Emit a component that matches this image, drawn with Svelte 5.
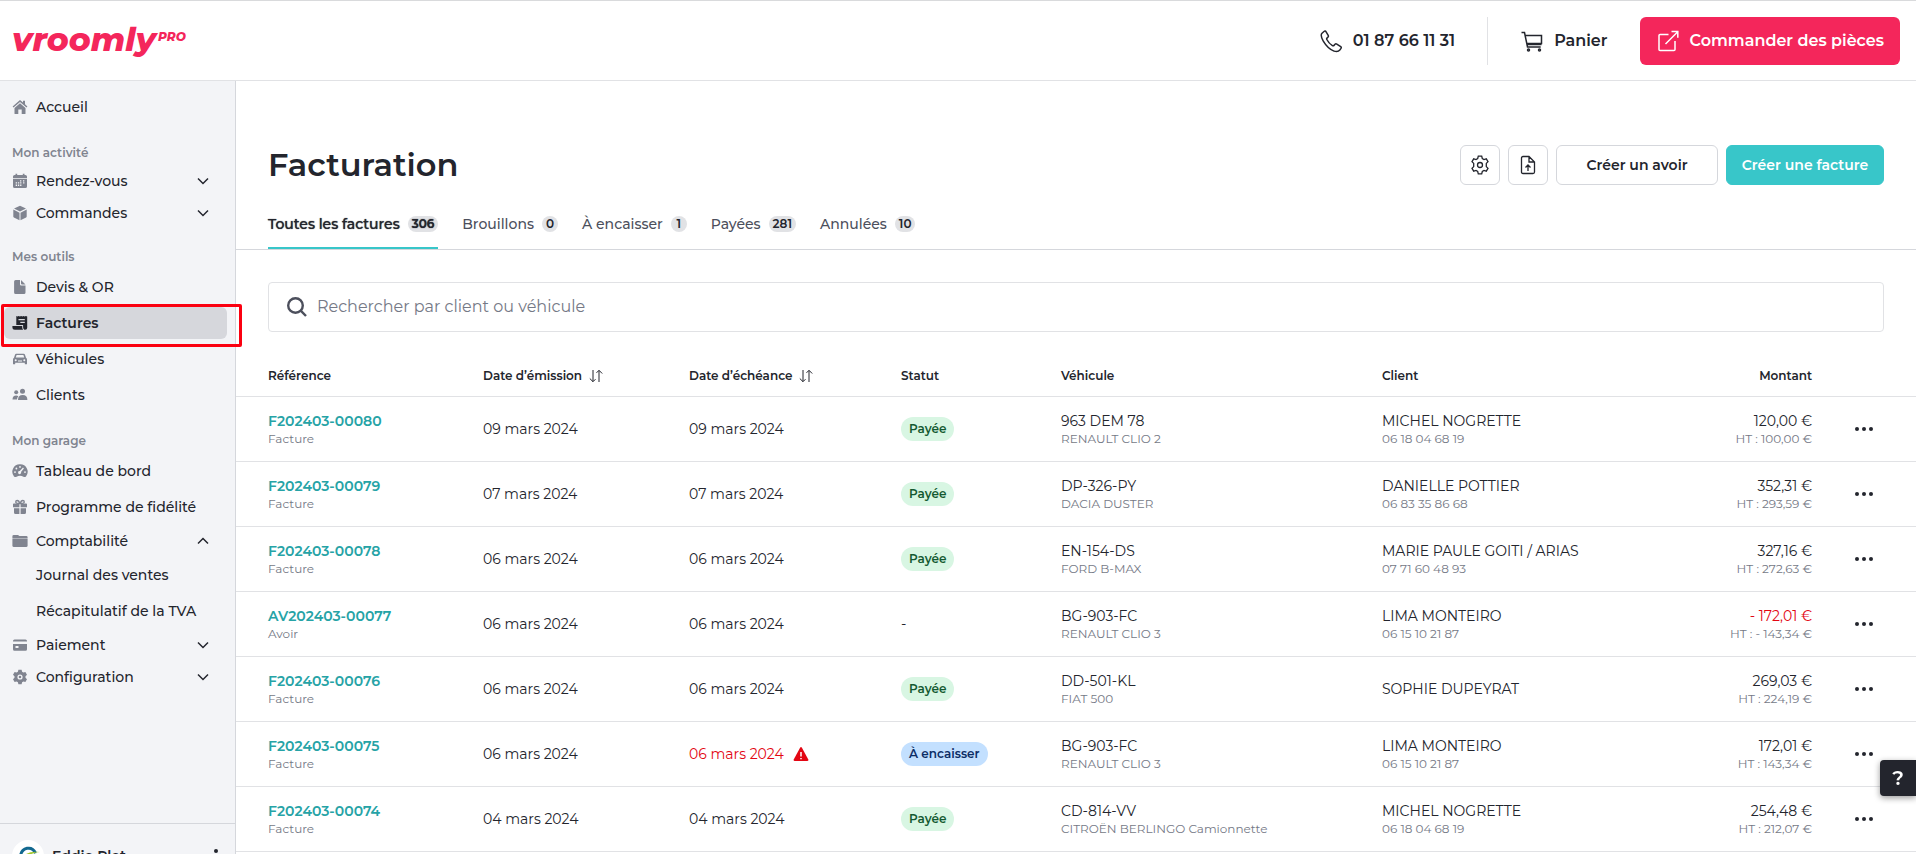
<script>
  let search = $state("");
  let activeTab = $state("Toutes les factures");

  const menu = [
    { items: [{ label: "Accueil", icon: "home" }] },
    {
      title: "Mon activité",
      items: [
        { label: "Rendez-vous", icon: "calendar", group: true },
        { label: "Commandes", icon: "box", group: true },
      ],
    },
    {
      title: "Mes outils",
      items: [
        { label: "Devis & OR", icon: "file" },
        { label: "Factures", icon: "receipt", active: true },
        { label: "Véhicules", icon: "car" },
        { label: "Clients", icon: "users" },
      ],
    },
    {
      title: "Mon garage",
      items: [
        { label: "Tableau de bord", icon: "gauge" },
        { label: "Programme de fidélité", icon: "gift" },
        {
          label: "Comptabilité",
          icon: "folder",
          group: true,
          children: ["Journal des ventes", "Récapitulatif de la TVA"],
        },
        { label: "Paiement", icon: "card", group: true },
        { label: "Configuration", icon: "cog", group: true },
      ],
    },
  ];

  const tabs = [
    { label: "Toutes les factures", count: 306 },
    { label: "Brouillons", count: 0 },
    { label: "À encaisser", count: 1 },
    { label: "Payées", count: 281 },
    { label: "Annulées", count: 10 },
  ];

  const invoices = [
    { ref: "F202403-00080", type: "Facture", issued: "09 mars 2024", due: "09 mars 2024", status: "Payée", plate: "963 DEM 78", model: "RENAULT CLIO 2", client: "MICHEL NOGRETTE", phone: "06 18 04 68 19", amount: "120,00 €", net: "100,00 €" },
    { ref: "F202403-00079", type: "Facture", issued: "07 mars 2024", due: "07 mars 2024", status: "Payée", plate: "DP-326-PY", model: "DACIA DUSTER", client: "DANIELLE POTTIER", phone: "06 83 35 86 68", amount: "352,31 €", net: "293,59 €" },
    { ref: "F202403-00078", type: "Facture", issued: "06 mars 2024", due: "06 mars 2024", status: "Payée", plate: "EN-154-DS", model: "FORD B-MAX", client: "MARIE PAULE GOITI / ARIAS", phone: "07 71 60 48 93", amount: "327,16 €", net: "272,63 €" },
    { ref: "AV202403-00077", type: "Avoir", issued: "06 mars 2024", due: "06 mars 2024", status: "", plate: "BG-903-FC", model: "RENAULT CLIO 3", client: "LIMA MONTEIRO", phone: "06 15 10 21 87", amount: "- 172,01 €", net: "- 143,34 €", negative: true },
    { ref: "F202403-00076", type: "Facture", issued: "06 mars 2024", due: "06 mars 2024", status: "Payée", plate: "DD-501-KL", model: "FIAT 500", client: "SOPHIE DUPEYRAT", phone: "", amount: "269,03 €", net: "224,19 €" },
    { ref: "F202403-00075", type: "Facture", issued: "06 mars 2024", due: "06 mars 2024", late: true, status: "À encaisser", plate: "BG-903-FC", model: "RENAULT CLIO 3", client: "LIMA MONTEIRO", phone: "06 15 10 21 87", amount: "172,01 €", net: "143,34 €" },
    { ref: "F202403-00074", type: "Facture", issued: "04 mars 2024", due: "04 mars 2024", status: "Payée", plate: "CD-814-VV", model: "CITROËN BERLINGO Camionnette", client: "MICHEL NOGRETTE", phone: "06 18 04 68 19", amount: "254,48 €", net: "212,07 €" },
  ];
</script>

{#snippet menuIcon(name)}
  <svg class="menu-icon" viewBox="0 0 16 16" fill="currentColor" aria-hidden="true">
    {#if name === "home"}
      <path d="M8 1 .6 7.4l.9 1L8 2.9l6.500 5.500.9-1L13 5.300V1.800h-2v1.800z" />
      <path d="M8 4.200 2.500 8.900V14.400q0 .6.6.6H6.300V10.500h3.400V15h3.200q.6 0 .6-.6V8.900z" />
    {:else if name === "calendar"}
      <path d="M3.500.8h1.700v1.100h5.600V.8h1.700v1.100h.9q1.600 0 1.600 1.600v1.400H1V3.500q0-1.600 1.600-1.600h.9z" />
      <path fill-rule="evenodd" d="M1 5.800h14v7.600q0 1.600-1.600 1.600H2.600Q1 15 1 13.400zM8 7.200v1.300h1.300V7.200zm3 0v1.300h1.300V7.200zM3.700 9.300v1.300H5V9.300zm2.200 0v1.300h1.300V9.300zm2.200 0v1.300h1.300V9.300zm3 0v1.300h1.300V9.300zM3.700 11.600v1.300H5v-1.300zm2.200 0v1.300h1.300v-1.300zm2.200 0v1.300h1.300v-1.300z" />
    {:else if name === "box"}
      <path d="M8 .8 14 3.500 8 6.600 2 3.500zM1.300 4.500l6.200 3.200v7.500l-5.600-2.800q-.6-.3-.6-1zM14.700 4.500 8.500 7.700v7.500l5.600-2.800q.6-.3.6-1z" />
    {:else if name === "file"}
      <path d="M3.600 1H8v4.200q0 1.300 1.300 1.300h4.200v7q0 1.500-1.500 1.500H3.600q-1.500 0-1.500-1.500v-11Q2.100 1 3.600 1zM9 1l4.500 4.500H10q-1 0-1-1z" />
    {:else if name === "receipt"}
      <path fill-rule="evenodd" d="M4.300 1 5.500 1.600 6.700 1l1.200.6L9.100 1l1.200.6 1.200-.6 1.200.6 1.200-.6 1.300.6v11.100q0 2-2 2h-.8q-1.300-.6-1.300-2.400V10H4.300zM6.500 4v1.200h6.300V4zm1.800 2.700v1.200h4.500V6.700z" />
      <path d="M.4 11h9.800v1.300q0 1.400.9 2.400H2.900Q.4 14.700.4 12.200z" />
    {:else if name === "car"}
      <path fill-rule="evenodd" d="M4.300 2.700h7.400q1 0 1.300 1l1 3q1 .5 1 1.700v4.300q0 .6-.6.6h-1q-.6 0-.6-.6v-.9H3.200v.9q0 .6-.6.6h-1q-.6 0-.6-.6V8.400q0-1.200 1-1.700l1-3q.3-1 1.300-1zM4.600 4l-.8 2.400h8.400L11.400 4zM3.700 8.200a1 1 0 1 0 0 2 1 1 0 0 0 0-2zm8.600 0a1 1 0 1 0 0 2 1 1 0 0 0 0-2zM6 9.400v1h4v-1z" />
    {:else if name === "users"}
      <circle cx="4.200" cy="5.300" r="2" /><circle cx="10.500" cy="4.300" r="2.500" />
      <path d="M.5 12.500q0-4 3.700-4 1.300 0 2.200.7Q5 10.500 5 12.500zM6 12.900q0-4.900 4.700-4.900t4.700 4.900z" />
    {:else if name === "gauge"}
      <path fill-rule="evenodd" d="M8 1.200a7.500 7.500 0 0 1 6 12.200q-1.200.9-2.500.4Q8 11.800 4.500 13.800q-1.300.5-2.500-.4A7.500 7.500 0 0 1 8 1.200zM8 3a.9.900 0 1 0 0 1.800A.9.900 0 0 0 8 3zM4.400 4.600a.9.900 0 1 0 0 1.800.9.900 0 0 0 0-1.800zM3 8.200A.9.900 0 1 0 3 10a.9.900 0 0 0 0-1.800zm10 0a.9.900 0 1 0 0 1.800.9.900 0 0 0 0-1.800zM11 4.500 7.800 8.100a1.500 1.500 0 1 0 1.200.9l2.900-3.600z" />
    {:else if name === "gift"}
      <path fill="none" stroke="currentColor" stroke-width="1.300" d="M7.800 4.500Q7 1.500 5.200 1.500 3.700 1.500 3.700 3q0 1.500 4.100 1.500zM8.200 4.500Q9 1.500 10.800 1.500q1.500 0 1.500 1.500 0 1.500-4.100 1.500z" />
      <path d="M1.800 4.500h5.600v3.800H1v-3q0-.8.8-.8zM8.600 4.500h5.600q.8 0 .8.8v3H8.600zM2 9.300h5.400V15H3.500Q2 15 2 13.500zM8.600 9.300H14v4.200q0 1.500-1.500 1.500H8.600z" />
    {:else if name === "folder"}
      <path d="M.4 5V3.300Q.4 2 1.700 2H6l1.400 1h7q1.200 0 1.200 1.200V5z" />
      <path opacity=".6" d="M.4 5h15.200v1H.4z" />
      <path d="M.4 6h15.200v6.500q0 1.500-1.500 1.500H1.900Q.4 14 .4 12.500z" />
    {:else if name === "card"}
      <path d="M1 4.600V4q0-1.500 1.500-1.500h11Q15 2.500 15 4v.6z" />
      <path fill-rule="evenodd" d="M1 7h14v5.200q0 1.500-1.500 1.500h-11Q1 13.700 1 12.200zm2.500 2v2h3V9z" />
    {:else if name === "cog"}
      <path fill-rule="evenodd" d="M6.400.8h3.200l.5 2 1.300.8 2-.6 1.600 2.800L13.500 7.200v1.600l1.500 1.400-1.600 2.800-2-.6-1.300.8-.5 2H6.400l-.5-2-1.300-.8-2 .6L1 10.200l1.500-1.400V7.200L1 5.800 2.600 3l2 .6 1.300-.8zM8 5.400a2.600 2.600 0 1 0 0 5.200 2.600 2.600 0 0 0 0-5.200zm0 1.300a1.300 1.300 0 1 1 0 2.600 1.300 1.300 0 0 1 0-2.600z" />
    {/if}
  </svg>
{/snippet}

{#snippet menuLink(item)}
  <a class="menu-item" class:active={item.active} href="#top">
    {#if item.icon}{@render menuIcon(item.icon)}{/if}
    <span class="menu-label">{item.label}</span>
  </a>
{/snippet}

<div class="app" id="top">
  <header>
    <a class="logo" href="#top" aria-label="vroomly PRO">vroomly<span>PRO</span></a>
    <div class="header-right">
      <a class="header-link" href="tel:+33187661131">
        <svg class="icon-24" viewBox="0 0 24 24" aria-hidden="true">
          <path d="M5 2.500 3 4.200C1.800 5.300 2 8 4.300 12.200c2.800 4.700 6.500 8.500 10.700 9.900 2.500.8 4.700.3 5.800-1.100l1.200-1.600q.7-1-.3-1.800l-3.900-2.500q-1-.6-1.800.2l-1.200 1.300q-.6.5-1.400 0C11 15.200 9 12.800 7.800 10.500q-.4-.8.200-1.400l1-1q.7-.8.2-1.700L7.100 2.900Q6.200 1.500 5 2.500z" />
        </svg>
        01 87 66 11 31
      </a>
      <a class="header-link cart" href="#top">
        <svg class="icon-24" viewBox="0 0 24 24" aria-hidden="true">
          <path d="M1.500 3.500h3l3 14.500h13.200M5.300 6.500h16.200v8H7M7 15.500h14.500" />
          <circle cx="8.500" cy="21" r="1" /><circle cx="19.500" cy="21" r="1" />
        </svg>
        Panier
      </a>
      <button class="order">
        <svg class="icon-24" viewBox="0 0 24 24" aria-hidden="true">
          <path d="M12.500 5.500H4q-1 0-1 1V20.500q0 1 1 1H18q1 0 1-1V12M9.500 15 21.500 3M15.500 2.500h6.300v6.300" />
        </svg>
        Commander des pièces
      </button>
    </div>
  </header>

  <div class="body">
    <aside>
      <nav>
        {#each menu as section}
          {#if section.title}<h2>{section.title}</h2>{/if}
          {#each section.items as item}
            {#if item.group}
              <button class="menu-group" aria-expanded={!!item.children}>
                {@render menuIcon(item.icon)}
                <span class="menu-label">{item.label}</span>
                <svg class="chevron" class:open={item.children} viewBox="0 0 12 12" aria-hidden="true">
                  <path d="m1 3.500 5 5 5-5" />
                </svg>
              </button>
              {#each item.children ?? [] as child}
                <a class="menu-item child" href="#top">{child}</a>
              {/each}
            {:else}
              {@render menuLink(item)}
            {/if}
          {/each}
        {/each}
      </nav>
      <div class="user">
        <svg class="avatar" viewBox="0 0 32 32" aria-hidden="true">
          <circle cx="16" cy="16" r="16" fill="#fff" />
          <path d="M8.500 16a8 9 0 0 1 15-3" fill="none" stroke="#12688f" stroke-width="3" />
          <path d="M9 19q5-8.500 19-7Q17 12.500 12 21z" fill="#a2c62c" />
          <path d="M13 21q4-7 12-6" fill="none" stroke="#4b9b3c" stroke-width="2" />
        </svg>
        <span class="user-name">Eddie Plet</span>
        <button class="kebab" aria-label="Mon compte">
          <svg viewBox="0 0 4 16" fill="currentColor" aria-hidden="true">
            <circle cx="2" cy="3" r="2" /><circle cx="2" cy="8" r="2" /><circle cx="2" cy="13" r="2" />
          </svg>
        </button>
      </div>
    </aside>

    <main>
      <div class="title-row">
        <h1>Facturation</h1>
        <div class="actions">
          <button class="btn square" aria-label="Paramètres">
            <svg class="icon-20" viewBox="0 0 20 20" aria-hidden="true">
              <path d="M8.300 1.200h3.400l.6 2.300 1.700 1 2.300-.7L18 6.700 16.300 8.400v3.200L18 13.300l-1.700 2.900-2.300-.7-1.700 1-.6 2.300H8.300l-.6-2.300-1.700-1-2.300.7L2 13.300l1.700-1.700V8.400L2 6.700l1.700-2.900 2.300.7 1.700-1z" />
              <circle cx="10" cy="10" r="2.500" />
            </svg>
          </button>
          <button class="btn square" aria-label="Importer">
            <svg class="icon-20" viewBox="0 0 20 20" aria-hidden="true">
              <path d="M5 1.500h6L16.500 7v10q0 1.500-1.500 1.500H5Q3.500 18.500 3.500 17V3Q3.500 1.500 5 1.500zM11 1.500V7h5.500M10 16v-5.500M7.500 12.500 10 10l2.500 2.500" />
            </svg>
          </button>
          <button class="btn wide">Créer un avoir</button>
          <button class="btn primary">Créer une facture</button>
        </div>
      </div>

      <div class="tabs" role="tablist">
        {#each tabs as tab}
          <button
            class="tab"
            class:active={tab.label === activeTab}
            role="tab"
            aria-selected={tab.label === activeTab}
            onclick={() => (activeTab = tab.label)}
          >
            {tab.label}
            <span class="count">{tab.count}</span>
          </button>
        {/each}
      </div>

      <label class="search">
        <svg class="icon-20" viewBox="0 0 20 20" aria-hidden="true">
          <circle cx="8.500" cy="8.500" r="7.300" /><path d="m13.700 13.700 5.300 5.300" />
        </svg>
        <input type="text" bind:value={search} placeholder="Rechercher par client ou véhicule" aria-label="Rechercher par client ou véhicule" />
      </label>

      <table>
        <colgroup>
          <col class="col-ref" />
          <col class="col-issued" />
          <col class="col-due" />
          <col class="col-status" />
          <col class="col-vehicle" />
          <col />
          <col class="col-amount" />
          <col class="col-menu" />
        </colgroup>
        <thead>
          <tr>
            <th>Référence</th>
            {#each ["Date d’émission", "Date d’échéance"] as label}
              <th>
                <button class="sort">
                  {label}
                  <svg viewBox="0 0 14 14" aria-hidden="true">
                    <path d="M4 1v11.500M.8 9.500 4 12.700 6.500 10.200M10 13V1.500M7.500 3.800 10 1.300l3.200 3.200" />
                  </svg>
                </button>
              </th>
            {/each}
            <th>Statut</th>
            <th>Véhicule</th>
            <th>Client</th>
            <th class="right">Montant</th>
            <th aria-label="Actions"></th>
          </tr>
        </thead>
        <tbody>
          {#each invoices as invoice}
            <tr>
              <td>
                <a class="ref" href="#top">{invoice.ref}</a>
                <div class="sub">{invoice.type}</div>
              </td>
              <td>{invoice.issued}</td>
              <td>
                <div class="due" class:red={invoice.late}>
                  {invoice.due}
                  {#if invoice.late}
                    <svg class="warning" viewBox="0 0 16 16" aria-label="En retard">
                      <path fill="currentColor" d="M7.200 1.500q.8-1.200 1.600 0l6.500 12q.6 1.400-.9 1.500H1.600Q.1 14.900.7 13.500z" />
                      <path d="M8 6v4.500M8 12v1.300" stroke="#fff" stroke-width="1.500" />
                    </svg>
                  {/if}
                </div>
              </td>
              <td>
                {#if invoice.status}
                  <span class="status" class:pending={invoice.late}>{invoice.status}</span>
                {:else}
                  -
                {/if}
              </td>
              <td>
                <div>{invoice.plate}</div>
                <div class="sub">{invoice.model}</div>
              </td>
              <td>
                <div>{invoice.client}</div>
                {#if invoice.phone}<div class="sub">{invoice.phone}</div>{/if}
              </td>
              <td class="right">
                <div class:red={invoice.negative}>{invoice.amount}</div>
                <div class="sub">HT : {invoice.net}</div>
              </td>
              <td>
                <button class="more" aria-label="Plus d'actions">
                  <svg viewBox="0 0 18 4" fill="currentColor" aria-hidden="true">
                    <circle cx="2" cy="2" r="2" /><circle cx="9" cy="2" r="2" /><circle cx="16" cy="2" r="2" />
                  </svg>
                </button>
              </td>
            </tr>
          {/each}
        </tbody>
      </table>
    </main>
  </div>

  <button class="help" aria-label="Aide">?</button>
</div>

<style>
  :global(body) {
    margin: 0;
  }
  .app {
    display: flex;
    flex-direction: column;
    height: 100vh;
    overflow: hidden;
    box-sizing: border-box;
    border-top: 1px solid #d9dadc;
    background: #fff;
    color: #23252d;
    font-family: Montserrat, Inter, "Open Sans", sans-serif;
    font-size: 14px;
    line-height: 20px;
  }
  .app * {
    box-sizing: border-box;
  }
  a {
    color: inherit;
    text-decoration: none;
  }
  button {
    padding: 0;
    border: 0;
    background: none;
    color: inherit;
    font: inherit;
    cursor: pointer;
  }
  svg {
    flex: none;
  }

  /* header */
  header {
    display: flex;
    align-items: center;
    justify-content: space-between;
    flex: none;
    height: 80px;
    padding: 0 16px 0 12px;
    border-bottom: 1px solid #e1e2e5;
  }
  .logo {
    display: flex;
    align-items: flex-start;
    padding-bottom: 4px;
    color: #f4265b;
    font-size: 33px;
    font-style: italic;
    font-weight: 800;
    line-height: 40px;
  }
  .logo span {
    margin-left: 2px;
    font-size: 12px;
    line-height: 36px;
  }
  .header-right {
    display: flex;
    align-items: center;
    font-size: 16px;
    font-weight: 600;
  }
  .header-link {
    display: flex;
    align-items: center;
    gap: 10px;
    height: 48px;
    padding-right: 32px;
  }
  .cart {
    padding-left: 32px;
    border-left: 1px solid #e1e2e5;
  }
  .icon-24 {
    width: 24px;
    height: 24px;
    fill: none;
    stroke: currentColor;
    stroke-width: 1.5;
  }
  .order {
    display: flex;
    align-items: center;
    gap: 10px;
    height: 48px;
    padding: 0 16px;
    border-radius: 6px;
    background: #f4265b;
    color: #fff;
  }

  /* sidebar */
  .body {
    display: flex;
    flex: 1;
    min-height: 0;
  }
  aside {
    display: flex;
    flex-direction: column;
    flex: none;
    width: 236px;
    border-right: 1px solid #d5d7dc;
    background: #f3f4f7;
    font-weight: 500;
  }
  nav {
    display: flex;
    flex-direction: column;
    flex: 1 0 auto;
    padding: 8px 8px 130px 4px;
  }
  h2 {
    margin: 0;
    padding: 16px 8px 0;
    color: #808490;
    font-size: 12px;
    font-weight: 600;
    line-height: 24px;
  }
  .menu-item,
  .menu-group {
    position: relative;
    display: flex;
    align-items: center;
    gap: 8px;
    height: 32px;
    padding: 0 8px;
    border-radius: 6px;
    text-align: left;
  }
  .menu-item {
    margin: 2px 0;
  }
  .menu-group {
    padding-right: 18px;
  }
  .child {
    padding-left: 32px;
  }
  .menu-icon {
    width: 16px;
    height: 16px;
    color: #808490;
  }
  .menu-label {
    flex: 1;
  }
  .active .menu-icon {
    color: inherit;
  }
  .menu-item.active {
    background: #d6d7dc;
    font-weight: 600;
  }
  .menu-item.active::after {
    position: absolute;
    z-index: 1;
    inset: -3px -15px -8px -3px;
    border: 3px solid #fb0010;
    border-radius: 2px;
    content: "";
  }
  .chevron {
    width: 12px;
    height: 12px;
    fill: none;
    stroke: currentColor;
    stroke-width: 1.5;
  }
  .chevron.open {
    transform: rotate(180deg);
  }
  .user {
    display: flex;
    align-items: center;
    gap: 8px;
    flex: none;
    height: 65px;
    padding: 0 17px 0 12px;
    border-top: 1px solid #d5d7dc;
    font-weight: 600;
  }
  .avatar {
    width: 32px;
    height: 32px;
  }
  .user-name {
    flex: 1;
  }
  .kebab svg {
    display: block;
    width: 4px;
    height: 16px;
  }

  /* content */
  main {
    flex: 1;
    min-width: 0;
    padding-top: 64px;
  }
  .title-row {
    display: flex;
    align-items: center;
    justify-content: space-between;
    padding: 0 32px;
  }
  h1 {
    margin: 0;
    font-size: 32px;
    font-weight: 600;
    line-height: 40px;
  }
  .actions {
    display: flex;
    gap: 8px;
  }
  .btn {
    display: flex;
    align-items: center;
    justify-content: center;
    height: 40px;
    padding: 0 14px;
    border: 1px solid #d5d7dc;
    border-radius: 6px;
    font-weight: 600;
  }
  .square {
    width: 40px;
    padding: 0;
  }
  .wide {
    min-width: 162px;
  }
  .primary {
    min-width: 158px;
    border-color: #38c6c9;
    background: #38c6c9;
    color: #fff;
  }
  .icon-20 {
    width: 20px;
    height: 20px;
    fill: none;
    stroke: currentColor;
    stroke-width: 1.3;
  }
  .tabs {
    display: flex;
    gap: 24px;
    margin-top: 16px;
    padding: 0 32px;
    border-bottom: 1px solid #d5d7dc;
    color: #4c4f5c;
    font-weight: 500;
  }
  .tab {
    display: flex;
    align-items: center;
    gap: 8px;
    height: 48px;
    border-bottom: 2px solid transparent;
  }
  /* the shadow thickens the label without changing the tab's width */
  .tab.active {
    border-color: #38c6c9;
    color: #23252d;
    text-shadow: 0 0 1px #23252d;
  }
  .count {
    min-width: 16px;
    padding: 0 4px;
    border-radius: 8px;
    background: #e1e2e5;
    color: #23252d;
    font-size: 12px;
    font-weight: 600;
    line-height: 16px;
  }
  .search {
    display: flex;
    align-items: center;
    gap: 10px;
    height: 50px;
    margin: 32px 32px 0;
    padding: 0 18px;
    border: 1px solid #e1e2e5;
    border-radius: 4px;
    color: #4c4f5c;
  }
  .search svg {
    stroke-width: 2.4;
  }
  .search input {
    flex: 1;
    padding: 0;
    border: 0;
    outline: 0;
    background: none;
    color: #23252d;
    font: inherit;
    font-size: 16px;
  }
  .search input::placeholder {
    color: #757986;
    opacity: 1;
  }

  /* invoice table */
  table {
    width: 100%;
    margin-top: 24px;
    border-collapse: separate;
    border-spacing: 0;
    table-layout: fixed;
  }
  .col-ref {
    width: 247px;
  }
  .col-issued {
    width: 206px;
  }
  .col-due {
    width: 212px;
  }
  .col-status {
    width: 160px;
  }
  .col-vehicle {
    width: 321px;
  }
  .col-amount {
    width: 160px;
  }
  .col-menu {
    width: 104px;
  }
  th,
  td {
    padding: 0;
    border-bottom: 1px solid #e1e2e5;
    text-align: left;
    vertical-align: middle;
  }
  th {
    height: 41px;
    font-size: 12px;
    font-weight: 600;
  }
  td {
    height: 65px;
  }
  th:first-child,
  td:first-child {
    padding-left: 32px;
  }
  .right {
    text-align: right;
  }
  .sort {
    display: flex;
    align-items: center;
    gap: 7px;
  }
  .sort svg {
    width: 14px;
    height: 14px;
    fill: none;
    stroke: currentColor;
  }
  .ref {
    display: block;
    color: #26a3a6;
    font-weight: 600;
  }
  .sub {
    color: #757986;
    font-size: 12px;
    line-height: 16px;
  }
  .due {
    display: flex;
    align-items: center;
    gap: 9px;
  }
  .red {
    color: #e30613;
  }
  .warning {
    width: 16px;
    height: 16px;
  }
  .status {
    display: inline-block;
    padding: 0 8px;
    border-radius: 12px;
    background: #d8f6e3;
    color: #145a32;
    font-size: 12px;
    font-weight: 600;
    line-height: 24px;
  }
  .status.pending {
    background: #c3e0ff;
    color: #0c2d66;
  }
  .more {
    display: block;
    margin: 0 auto;
    padding: 8px;
  }
  .more svg {
    display: block;
    width: 18px;
    height: 4px;
  }
  .help {
    position: fixed;
    right: 0;
    bottom: 58px;
    width: 36px;
    height: 36px;
    border-radius: 4px 0 0 4px;
    background: #23252d;
    box-shadow: 0 2px 6px rgba(0, 0, 0, 0.4);
    color: #fff;
    font-size: 20px;
    font-weight: 600;
  }
</style>
